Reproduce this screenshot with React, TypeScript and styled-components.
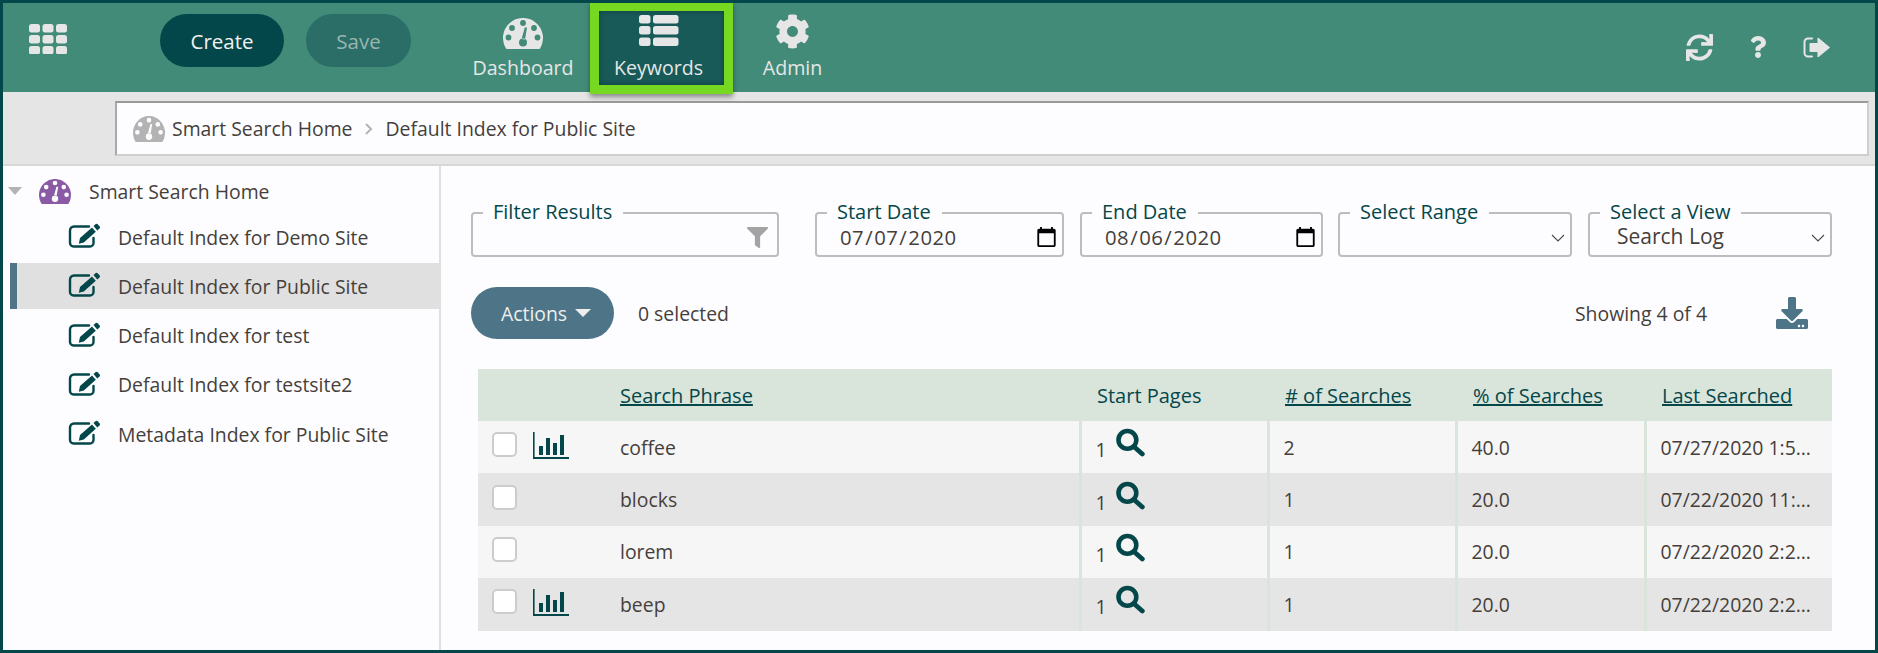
import * as React from 'react'
import styled, { createGlobalStyle } from 'styled-components'
import { FaCog, FaDownload, FaFilter, FaQuestion, FaSync } from 'react-icons/fa'

const DARK = '#04474a'
const SLATE = '#4d7587'
const TEXT = '#453f3b'
const ICON_LIGHT = '#e6e6e6'

const GlobalStyle = createGlobalStyle`
  html, body { margin: 0; padding: 0; height: 100%; overflow: hidden; background: #fdfdff; }
  body { font-family: "Open Sans", "Noto Sans", sans-serif; font-size: 19.4px; color: ${TEXT}; }
  * { box-sizing: border-box; }
`

const Frame = styled.div`
  width: 1878px;
  height: 653px;
  border: 3px solid ${DARK};
  display: flex;
  flex-direction: column;
  overflow: hidden;
`

const Header = styled.header`
  height: 89px;
  flex: none;
  display: flex;
  background: #428b79;
  position: relative;
  z-index: 2;
`

const Waffle = styled.svg`
  width: 38px;
  height: 30px;
  margin: 21px 0 0 26px;
  flex: none;
`

const PillButton = styled.button<{ $disabled?: boolean }>`
  height: 53px;
  width: ${p => (p.$disabled ? '105px' : '124px')};
  margin: 11px 0 0 ${p => (p.$disabled ? '22px' : '93px')};
  flex: none;
  border: 0;
  border-radius: 27px;
  font: 400 20.5px "Open Sans", sans-serif;
  color: ${p => (p.$disabled ? '#9ab5ae' : '#f2f2f2')};
  background: ${p => (p.$disabled ? '#2a6e67' : DARK)};
`

const NavList = styled.nav`
  display: flex;
  margin-left: 45px;
`

const NavItem = styled.div<{ $width: number; $active?: boolean }>`
  width: ${p => p.$width}px;
  display: flex;
  flex-direction: column;
  align-items: center;
  padding-top: 12px;
  color: ${ICON_LIGHT};
  ${p => p.$active && `
    margin: -1px 0 -2px;
    padding: 4px 6px 0 0;
    height: 92px;
    border: 9px solid #76d820;
    background: #175a58;
    box-shadow: 0 3px 5px rgba(0, 0, 0, 0.4), inset 0 0 5px rgba(0, 0, 0, 0.3);
  `}
`

const NavIcon = styled.div<{ $lift?: number }>`
  height: 36px;
  display: flex;
  align-items: center;
  justify-content: center;
  padding-bottom: ${p => p.$lift ?? 0}px;
`

const NavLabel = styled.span`
  margin-top: 5px;
  line-height: 24px;
  font-size: 19.6px;
`

const HeaderTools = styled.div`
  margin-left: auto;
  display: flex;
  align-items: center;
  height: 88px;
  padding-right: 45px;
  gap: 34px;
  color: ${ICON_LIGHT};
`

const CrumbBar = styled.div`
  height: 74px;
  flex: none;
  background: #e5e5e5;
  padding: 9px 6px 10px 112px;
  border-bottom: 2px solid #d8d8d8;
`

const CrumbBox = styled.div`
  height: 55px;
  background: #fdfdff;
  border: 2px solid #cfcfcf;
  border-top-color: #9a9a9a;
  border-left-color: #a8a8a8;
  display: flex;
  align-items: center;
  padding-left: 16px;
  color: ${TEXT};
`

const GaugeSvg = styled.svg<{ $width: number; $height: number; $color: string; $gap: number }>`
  width: ${p => p.$width}px;
  height: ${p => p.$height}px;
  flex: none;
  color: ${p => p.$color};
  margin-right: ${p => p.$gap}px;
`

const CrumbChevron = styled.svg`
  width: 8px;
  height: 12px;
  margin: 0 12px 0 13px;
`

const Main = styled.div`
  flex: 1;
  display: flex;
  min-height: 0;
`

const Sidebar = styled.aside`
  width: 438px;
  flex: none;
  border-right: 2px solid #e0e0e0;
  padding-top: 11px;
`

const TreeRoot = styled.div`
  display: flex;
  align-items: center;
  height: 28px;
  padding-left: 5px;
  margin-bottom: 9px;
  color: ${TEXT};
`

const TreeCaret = styled.span`
  width: 0;
  height: 0;
  border-left: 7px solid transparent;
  border-right: 7px solid transparent;
  border-top: 8px solid #b3b3b3;
  margin-right: 17px;
`

const TreeRow = styled.div<{ $selected?: boolean }>`
  height: 46px;
  margin: 0 0 3.3px 7px;
  display: flex;
  align-items: center;
  padding-left: 51px;
  border-left: 7px solid ${p => (p.$selected ? SLATE : 'transparent')};
  background: ${p => (p.$selected ? '#e0e0e0' : 'transparent')};
`

const EditSvg = styled.svg`
  width: 33px;
  height: 25px;
  flex: none;
  margin: -3px 17px 0 0;
`

const Content = styled.section`
  flex: 1;
  min-width: 0;
  padding: 34px 43px 0 30px;
`

const Filters = styled.div`
  display: flex;
`

const Field = styled.fieldset<{ $width: number; $gap?: number }>`
  width: ${p => p.$width}px;
  height: 57px;
  margin: 0 ${p => p.$gap ?? 0}px 0 0;
  padding: 0;
  border: 2px solid #bdbdbd;
  border-radius: 4px;
  display: flex;
  align-items: center;
  min-width: 0;
`

const FieldLabel = styled.legend`
  margin-left: 10px;
  padding: 0 11px 2px 10px;
  font-size: 20px;
  line-height: 24px;
  color: ${DARK};
`

const FilterIcon = styled(FaFilter)`
  width: 21px;
  height: 21px;
  color: #a3a3a3;
  margin: -6px 9px 0 auto;
`

const DateInput = styled.input`
  width: 100%;
  border: 0;
  outline: 0;
  padding: 0 4px 0 22px;
  background: transparent;
  font: 400 20.3px "Open Sans", sans-serif;
  letter-spacing: 0.5px;
  color: ${TEXT};
  margin-top: -7px;

  &::-webkit-calendar-picker-indicator {
    width: 23px;
    height: 23px;
    padding: 0;
    margin: 0;
  }
`

const Select = styled.select`
  flex: 1;
  min-width: 0;
  appearance: none;
  border: 0;
  outline: 0;
  padding: 0 0 0 27px;
  background: transparent;
  font: 400 21px "Open Sans", sans-serif;
  color: ${TEXT};
  margin-top: -9px;
`

const SelectArrow = styled.svg`
  width: 14px;
  height: 8px;
  flex: none;
  margin: -5px 5px 0 0;
`

const ActionsRow = styled.div`
  display: flex;
  align-items: center;
  height: 52px;
  margin-top: 30px;
`

const ActionsButton = styled.button`
  width: 143px;
  height: 52px;
  padding: 0 0 0 7px;
  border: 0;
  border-radius: 26px;
  background: ${SLATE};
  color: #eeeeee;
  font: 400 19.4px "Open Sans", sans-serif;
  display: flex;
  align-items: center;
  justify-content: center;
  gap: 8px;
`

const ActionsCaret = styled.span`
  width: 0;
  height: 0;
  border-left: 8px solid transparent;
  border-right: 8px solid transparent;
  border-top: 8px solid #eeeeee;
`

const Selected = styled.span`
  margin-left: 24px;
`

const Showing = styled.span`
  margin-left: auto;
`

const DownloadIcon = styled(FaDownload)`
  width: 34px;
  height: 32px;
  color: ${SLATE};
  margin: 0 23px 0 68px;
`

const Table = styled.table`
  width: 1354px;
  margin: 30px 0 0 7px;
  border-collapse: collapse;
  table-layout: fixed;
`

const HeadRow = styled.tr`
  height: 52px;
  background: #d9e4da;
`

const HeadCell = styled.th<{ $pad?: number }>`
  text-align: left;
  font-weight: 400;
  padding: 0 0 0 ${p => p.$pad ?? 17}px;
  color: ${DARK};
  font-size: 20px;
`

const SortLink = styled.a`
  color: ${DARK};
  text-decoration: underline;
`

const Row = styled.tr<{ $alt?: boolean }>`
  height: 52.4px;
  background: ${p => (p.$alt ? '#e5e5e5' : '#f6f6f6')};
`

const Cell = styled.td`
  padding: 0 0 0 14px;
  white-space: nowrap;
  overflow: hidden;
  text-overflow: ellipsis;
  border-left: 3px solid #d9e4da;
`

const LastCell = styled(Cell)`
  padding-right: 20px;
`

const SelectCell = styled.td`
  padding: 0 0 0 14px;
`

const PhraseCell = styled.td`
  padding: 0 0 0 15px;
`

const SelectBox = styled.div`
  display: flex;
  gap: 16px;
  align-items: flex-start;
  height: 28px;
  margin-top: -2px;
`

const Check = styled.input`
  appearance: none;
  width: 25px;
  height: 25px;
  margin: 0;
  background: #fff;
  border: 2px solid #cccccc;
  border-radius: 5px;
`

const StartPages = styled.div`
  display: flex;
  gap: 9px;
`

const StartCount = styled.span`
  margin-top: 6px;
  line-height: 24px;
`

const SearchSvg = styled.svg`
  width: 29px;
  height: 29px;
  flex: none;
  margin-top: -4px;
`

const BlockRects = ({ rects, fill }: { rects: number[][]; fill: string }) => (
  <>
    {rects.map(([x, y, w, h]) => (
      <rect key={`${x}-${y}`} x={x} y={y} width={w} height={h} rx={2.5} fill={fill} />
    ))}
  </>
)

const WAFFLE_RECTS = [0, 13.5, 27].flatMap(x => [0, 11, 22].map(y => [x, y, 11, 8.5]))
const LIST_RECTS = [0, 11, 22.5].flatMap(y => [[0, y, 11.5, 8.5], [14, y, 25.5, 8.5]])

const hole = (cx: number, cy: number, r: number) =>
  `M${cx - r} ${cy}a${r} ${r} 0 1 0 ${2 * r} 0a${r} ${r} 0 1 0 ${-2 * r} 0z`

const GAUGE_PATH = [
  'M4 31a1.5 1.5 0 0 1-1.3-1A20 20 0 1 1 37.3 30a1.5 1.5 0 0 1-1.3 1z',
  hole(20, 5, 2.9),
  hole(9, 10, 2.9),
  hole(31, 10, 2.9),
  hole(5.5, 19.5, 2.9),
  hole(34.5, 19.5, 2.9),
  hole(20, 24.5, 4),
  'M18.6 21L21.8 9.5h2.2L22 21.5z'
].join(' ')

const GaugeIcon = (props: { $width: number; $height: number; $color: string; $gap: number }) => (
  <GaugeSvg viewBox='0 0 40 31' preserveAspectRatio='none' {...props}>
    <path d={GAUGE_PATH} fill='currentColor' fillRule='evenodd' />
  </GaugeSvg>
)

const ChartIcon = () => (
  <svg width='36' height='27' viewBox='0 0 36 27' fill={DARK}>
    <rect x='0' y='0' width='1.6' height='27' />
    <rect x='0' y='25' width='36' height='2' />
    <rect x='6' y='14' width='4' height='9' />
    <rect x='13' y='6' width='4' height='17' />
    <rect x='20' y='11' width='4' height='12' />
    <rect x='27' y='3' width='4' height='20' />
  </svg>
)

const EditIcon = () => (
  <EditSvg viewBox='0 0 33 25'>
    <path
      d='M21 3.5H6a4 4 0 0 0-4 4V20a3.5 3.5 0 0 0 3.5 3.5H22a3.5 3.5 0 0 0 3.5-3.5v-5'
      fill='none'
      stroke={DARK}
      strokeWidth='2.4'
      strokeLinecap='round'
    />
    <path d='M12 15L24 4.5l3.8 4.2L15.8 19.5l-5 1.3z' fill={DARK} />
    <path d='M25.5 3l2.2-2a1.5 1.5 0 0 1 2 .2l2 2.4a1.5 1.5 0 0 1-.2 2l-2.2 1.9z' fill={DARK} />
  </EditSvg>
)

const SearchIcon = () => (
  <SearchSvg viewBox='0 0 28 27'>
    <circle cx='11' cy='11' r='8.6' fill='none' stroke={DARK} strokeWidth='4.4' />
    <path d='M18 18l7.4 6.6' fill='none' stroke={DARK} strokeWidth='4.6' strokeLinecap='round' />
  </SearchSvg>
)

const SignOutIcon = () => (
  <svg width='27' height='21' viewBox='0 0 27 21'>
    <path
      d='M9 1.5H5A3.5 3.5 0 0 0 1.5 5v11A3.5 3.5 0 0 0 5 19.5h4'
      fill='none'
      stroke={ICON_LIGHT}
      strokeWidth='2'
      strokeLinecap='round'
    />
    <path d='M7 6.5h8V1l11.5 9.5L15 20v-5.5H7z' fill={ICON_LIGHT} strokeLinejoin='round' stroke={ICON_LIGHT} />
  </svg>
)

const ArrowIcon = () => (
  <SelectArrow viewBox='0 0 14 8'>
    <path d='M1 1l6 6 6-6' fill='none' stroke='#4a4a4a' strokeWidth='1.1' />
  </SelectArrow>
)

const rows = [
  { phrase: 'coffee', chart: true, count: '2', percent: '40.0', last: '07/27/2020 1:52:14 PM' },
  { phrase: 'blocks', chart: false, count: '1', percent: '20.0', last: '07/22/2020 11:04:37 AM' },
  { phrase: 'lorem', chart: false, count: '1', percent: '20.0', last: '07/22/2020 2:21:09 PM' },
  { phrase: 'beep', chart: true, count: '1', percent: '20.0', last: '07/22/2020 2:24:51 PM' }
]

const indexes = [
  'Default Index for Demo Site',
  'Default Index for Public Site',
  'Default Index for test',
  'Default Index for testsite2',
  'Metadata Index for Public Site'
]

const App = () => {
  return (
    <Frame>
      <GlobalStyle />
      <Header>
        <Waffle viewBox='0 0 38 30'><BlockRects rects={WAFFLE_RECTS} fill={ICON_LIGHT} /></Waffle>
        <PillButton>Create</PillButton>
        <PillButton $disabled>Save</PillButton>
        <NavList>
          <NavItem $width={134}>
            <NavIcon><GaugeIcon $width={40} $height={31} $color={ICON_LIGHT} $gap={0} /></NavIcon>
            <NavLabel>Dashboard</NavLabel>
          </NavItem>
          <NavItem $width={143} $active>
            <NavIcon $lift={5}>
              <svg width='40' height='31' viewBox='0 0 40 31'><BlockRects rects={LIST_RECTS} fill={ICON_LIGHT} /></svg>
            </NavIcon>
            <NavLabel>Keywords</NavLabel>
          </NavItem>
          <NavItem $width={119}>
            <NavIcon $lift={3}><FaCog size={35} /></NavIcon>
            <NavLabel>Admin</NavLabel>
          </NavItem>
        </NavList>
        <HeaderTools>
          <FaSync size={27} />
          <FaQuestion size={22} />
          <SignOutIcon />
        </HeaderTools>
      </Header>
      <CrumbBar>
        <CrumbBox>
          <GaugeIcon $width={32} $height={26} $color='#b3b3b3' $gap={7} />
          <span>Smart Search Home</span>
          <CrumbChevron viewBox='0 0 8 12'>
            <path d='M1 1l5 5-5 5' fill='none' stroke='#b3b3b3' strokeWidth='2' />
          </CrumbChevron>
          <span>Default Index for Public Site</span>
        </CrumbBox>
      </CrumbBar>
      <Main>
        <Sidebar>
          <TreeRoot>
            <TreeCaret />
            <GaugeIcon $width={32} $height={25} $color='#8b5aa5' $gap={18} />
            <span>Smart Search Home</span>
          </TreeRoot>
          {indexes.map(name => (
            <TreeRow key={name} $selected={name === 'Default Index for Public Site'}>
              <EditIcon />
              <span>{name}</span>
            </TreeRow>
          ))}
        </Sidebar>
        <Content>
          <Filters>
            <Field $width={308} $gap={36}>
              <FieldLabel>Filter Results</FieldLabel>
              <FilterIcon />
            </Field>
            <Field $width={249} $gap={16}>
              <FieldLabel>Start Date</FieldLabel>
              <DateInput type='date' defaultValue='2020-07-07' />
            </Field>
            <Field $width={243} $gap={15}>
              <FieldLabel>End Date</FieldLabel>
              <DateInput type='date' defaultValue='2020-08-06' />
            </Field>
            <Field $width={234} $gap={16}>
              <FieldLabel>Select Range</FieldLabel>
              <Select defaultValue=''><option value='' /></Select>
              <ArrowIcon />
            </Field>
            <Field $width={244}>
              <FieldLabel>Select a View</FieldLabel>
              <Select defaultValue='log'><option value='log'>Search Log</option></Select>
              <ArrowIcon />
            </Field>
          </Filters>
          <ActionsRow>
            <ActionsButton>Actions<ActionsCaret /></ActionsButton>
            <Selected>0 selected</Selected>
            <Showing>Showing 4 of 4</Showing>
            <DownloadIcon />
          </ActionsRow>
          <Table>
            <colgroup>
              <col style={{ width: 127 }} />
              <col style={{ width: 475 }} />
              <col style={{ width: 188 }} />
              <col style={{ width: 188 }} />
              <col style={{ width: 189 }} />
              <col style={{ width: 187 }} />
            </colgroup>
            <thead>
              <HeadRow>
                <HeadCell />
                <HeadCell $pad={15}><SortLink>Search Phrase</SortLink></HeadCell>
                <HeadCell>Start Pages</HeadCell>
                <HeadCell><SortLink># of Searches</SortLink></HeadCell>
                <HeadCell><SortLink>% of Searches</SortLink></HeadCell>
                <HeadCell><SortLink>Last Searched</SortLink></HeadCell>
              </HeadRow>
            </thead>
            <tbody>
              {rows.map((row, i) => (
                <Row key={row.phrase} $alt={i % 2 === 1}>
                  <SelectCell>
                    <SelectBox>
                      <Check type='checkbox' />
                      {row.chart && <ChartIcon />}
                    </SelectBox>
                  </SelectCell>
                  <PhraseCell>{row.phrase}</PhraseCell>
                  <Cell>
                    <StartPages>
                      <StartCount>1</StartCount>
                      <SearchIcon />
                    </StartPages>
                  </Cell>
                  <Cell>{row.count}</Cell>
                  <Cell>{row.percent}</Cell>
                  <LastCell>{row.last}</LastCell>
                </Row>
              ))}
            </tbody>
          </Table>
        </Content>
      </Main>
    </Frame>
  )
}

export default App
